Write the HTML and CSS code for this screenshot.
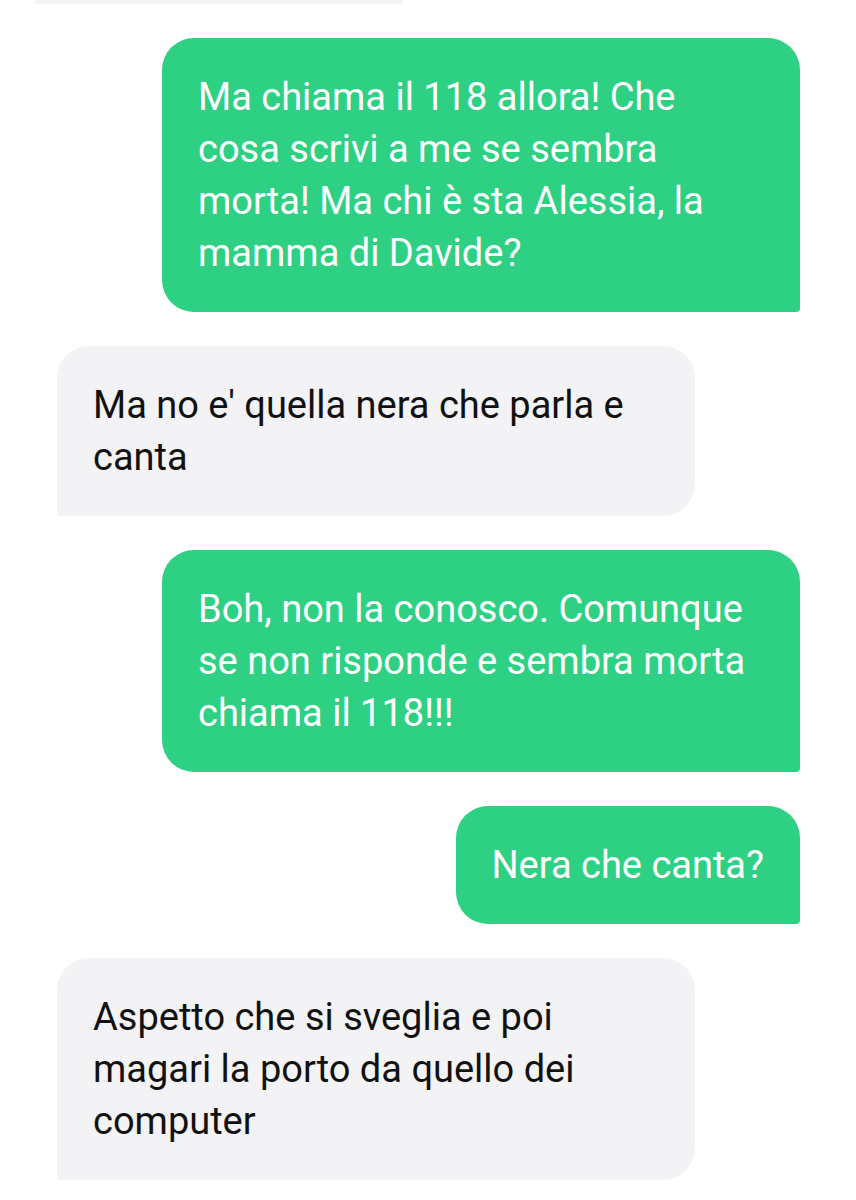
FILE: index.html
```html
<!DOCTYPE html>
<html lang="it">
<head>
    <meta charset="UTF-8">
    <meta name="viewport" content="width=device-width, initial-scale=1.0">
    <title>Messaggi</title>
    <link rel="stylesheet" href="styles.css">
</head>
<body>
    <div class="chat">
        <div class="bubble received stub"></div>
        <div class="bubble sent">Ma chiama il 118 allora! Che cosa scrivi a me se sembra morta! Ma chi è sta Alessia, la mamma di Davide?</div>
        <div class="bubble received">Ma no e' quella nera che parla e canta</div>
        <div class="bubble sent">Boh, non la conosco. Comunque se non risponde e sembra morta chiama il 118!!!</div>
        <div class="bubble sent">Nera che canta?</div>
        <div class="bubble received">Aspetto che si sveglia e poi magari la porto da quello dei computer</div>
    </div>
</body>
</html>
```

FILE: styles.css
```css
body, html {
    margin: 0;
    padding: 0;
    background: #ffffff;
    font-family: Roboto, "Noto Sans", sans-serif;
}

.chat {
    display: flex;
    flex-direction: column;
    gap: 34px;
    padding: 0 56px 0 57px;
}

.bubble {
    box-sizing: border-box;
    max-width: 638px;
    padding: 33px 36px;
    font-size: 38px;
    line-height: 52px;
    border-radius: 32px;
}

.sent {
    align-self: flex-end;
    background: #2ed083; /* green */
    color: #ffffff;
    border-bottom-right-radius: 4px;
}

.received {
    align-self: flex-start;
    background: #f3f3f6; /* light grey */
    color: #111111;
    border-bottom-left-radius: 4px;
}

/* bubble cut off at the top of the screen */
.stub {
    width: 368px;
    height: 4px;
    padding: 0;
    margin-left: -22px;
    border-radius: 0 0 20px 4px;
}
```
